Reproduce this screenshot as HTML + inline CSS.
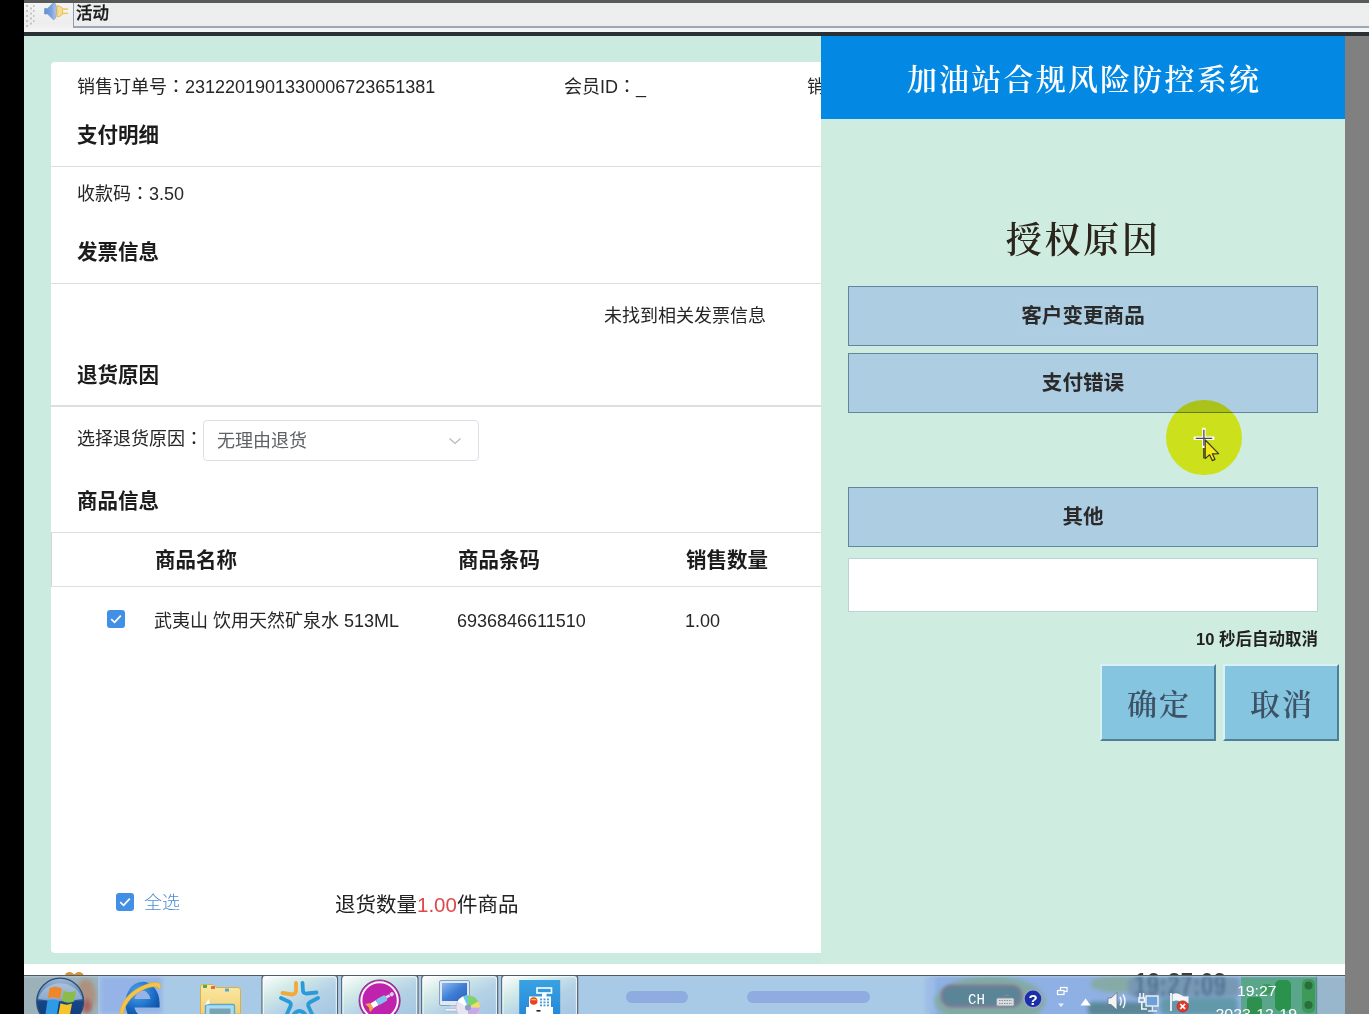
<!DOCTYPE html>
<html lang="zh-CN">
<head>
<meta charset="utf-8">
<title>加油站合规风险防控系统</title>
<style>
*{box-sizing:border-box;margin:0;padding:0}
html,body{width:1369px;height:1014px;overflow:hidden;background:#cbebe0}
body{position:relative;font-family:"Liberation Sans","Noto Sans CJK SC",sans-serif;color:#2b2b2b;font-size:18px}
.abs{position:absolute}
#blackbar{left:0;top:0;width:24px;height:1014px;background:#000}
#topstrip{left:0;top:0;width:1369px;height:3px;background:#58595a}
#toolbar{left:24px;top:3px;width:1345px;height:29px;background:linear-gradient(#f3f4f4,#eeeded 70%,#f4f6f7)}
#tbfield{left:49px;top:0;width:1296px;height:25px;border-left:1px solid #8e9bb0;border-bottom:2px solid #9ba7b5;background:linear-gradient(#eceeee,#eeeded)}
#tbtext{left:76px;top:3px;font-size:16.5px;line-height:20px;font-weight:500;color:#1c1c1c;-webkit-text-stroke:0.35px #1c1c1c}
#darkline{left:24px;top:32px;width:1345px;height:4px;background:#2b3034}
#graystrip{left:1345px;top:36px;width:24px;height:978px;background:#808080}
#main{left:24px;top:36px;width:1321px;height:928px;background:#cbebe0}
#card{left:51px;top:62.300px;width:800px;height:890.400px;background:#fff;border-radius:4px}
.t{position:absolute;white-space:nowrap;line-height:24px;font-size:18px;color:#262626;margin-top:0.7px}
.c{font-family:"Noto Sans CJK JP",sans-serif;line-height:0}
.h{position:absolute;white-space:nowrap;line-height:28px;font-size:20.5px;font-weight:700;color:#1c1c1c;transform:translateY(0px) scaleY(1.02)}
.hr{position:absolute;left:51px;width:780px;height:1.500px;background:#dddde2;margin-top:-0.400px}
#dialog{left:821px;top:36px;width:524px;height:928px;background:#ceece0}
#dhead{left:0;top:0;width:524px;height:83px;background:#0388e3;color:#fff;text-align:center;font-family:"Liberation Serif","Noto Serif CJK SC",serif;font-weight:600;font-size:30px;line-height:88px;letter-spacing:2.2px;text-indent:2px}
.rbtn{position:absolute;left:27px;width:470px;height:60px;background:#adcde2;border:1px solid #62849c;text-align:center;font-size:20.6px;font-weight:700;line-height:58px;color:#2a2a2a}
.bbtn{position:absolute;top:628px;width:116px;height:77px;background:#86c5e0;border-top:2px solid #d9f0f7;border-left:2px solid #d9f0f7;border-right:2px solid #4f7f96;border-bottom:2px solid #4f7f96;text-align:center;font-family:"Liberation Serif","Noto Serif CJK SC",serif;font-size:30px;font-weight:600;line-height:78px;color:#3d5266;letter-spacing:2px;text-indent:2px}
.cb{width:18px;height:18px;border-radius:3px;background:#4290e6}
.cb svg{position:absolute;left:0;top:0}
#taskbar{left:24px;top:975px;width:1321px;height:39px;background:#a9cbe6}
#whitegap{left:24px;top:964px;width:1321px;height:11px;background:#fff}
</style>
</head>
<body>
<div class="abs" id="main"></div>
<div class="abs" id="card"></div>

<div class="t" style="left:77px;top:74px">销售订单号<span class="c" lang="ja">：</span>2312201901330006723651381</div>
<div class="t" style="left:564px;top:74px">会员ID<span class="c" lang="ja">：</span>_</div>
<div class="t" style="left:807px;top:74px">销售</div>
<div class="h" style="left:77px;top:121px">支付明细</div>
<div class="hr" style="top:166px"></div>
<div class="t" style="left:77px;top:181px">收款码<span class="c" lang="ja">：</span>3.50</div>
<div class="h" style="left:77px;top:238px">发票信息</div>
<div class="hr" style="top:283px"></div>
<div class="t" style="left:604px;top:303px">未找到相关发票信息</div>
<div class="h" style="left:77px;top:361px">退货原因</div>
<div class="hr" style="top:405.700px"></div>
<div class="t" style="left:77px;top:426.800px">选择退货原因<span class="c" lang="ja">：</span></div>
<div class="abs" id="select" style="left:203.300px;top:419.600px;width:275.700px;height:41.400px;border:1px solid #dcdfe6;border-radius:4px;background:#fff">
  <div class="t" style="left:12.700px;top:7.800px;color:#606266">无理由退货</div>
  <svg class="abs" style="left:244px;top:14px" width="14" height="12" viewBox="0 0 14 12"><path d="M1.5 3.5 L7 8.5 L12.5 3.5" fill="none" stroke="#b4b8c0" stroke-width="1.2"/></svg>
</div>
<div class="h" style="left:77px;top:487px">商品信息</div>
<div class="hr" style="top:532px"></div>
<div class="h" style="left:155px;top:546px">商品名称</div>
<div class="h" style="left:458px;top:546px">商品条码</div>
<div class="h" style="left:686px;top:546px">销售数量</div>
<div class="hr" style="top:586px"></div>
<div class="abs" style="left:51px;top:532px;width:1.200px;height:55px;background:#d4d6da"></div>
<div class="abs cb" style="left:106.5px;top:610px"><svg width="18" height="18" viewBox="0 0 18 18"><path d="M4.2 9.2 L7.6 12.3 L13.8 5.6" fill="none" stroke="#fff" stroke-width="1.7"/></svg></div>
<div class="t" style="left:154px;top:608px">武夷山 饮用天然矿泉水 513ML</div>
<div class="t" style="left:457px;top:608px">6936846611510</div>
<div class="t" style="left:685px;top:608px">1.00</div>
<div class="abs cb" style="left:115.5px;top:892.5px"><svg width="18" height="18" viewBox="0 0 18 18"><path d="M4.2 9.2 L7.6 12.3 L13.8 5.6" fill="none" stroke="#fff" stroke-width="1.7"/></svg></div>
<div class="t" style="left:144px;top:890px;color:#4a8bd6;font-weight:300">全选</div>
<div class="t" style="left:335px;top:890px;font-size:20.5px;line-height:28px;color:#222">退货数量<span style="color:#e0464a;font-weight:300">1.00</span>件商品</div>

<div class="abs" id="dialog">
  <div class="abs" id="dhead">加油站合规风险防控系统</div>
  <div class="abs" id="dtitle" style="left:0;top:179.5px;width:524px;text-align:center;font-family:'Liberation Serif','Noto Serif CJK SC',serif;font-size:36px;font-weight:600;line-height:50px;color:#2c251c;letter-spacing:2.8px;text-indent:0.5px">授权原因</div>
  <div class="rbtn" style="top:250px">客户变更商品</div>
  <div class="abs" style="left:198.500px;top:264px;width:126px;height:29.500px;border:1px dotted #bccbea"></div>
  <div class="rbtn" style="top:317px">支付错误</div>
  <div class="rbtn" style="top:451px">其他</div>
  <div class="abs" id="dinput" style="left:27px;top:522px;width:470px;height:54px;background:#fff;border:1px solid #b9d4d6"></div>
  <div class="t" style="right:27px;top:590.5px;font-size:16.5px;font-weight:700;color:#222">10 秒后自动取消</div>
  <div class="bbtn" style="left:279px">确定</div>
  <div class="bbtn" style="left:402px">取消</div>
</div>
<div class="abs" id="cursorhl" style="left:1166px;top:399.5px;width:75.5px;height:75.5px;border-radius:50%;background:#fdf21e;mix-blend-mode:multiply"></div>
<svg class="abs" id="cursor" style="left:1190px;top:425px" width="34" height="40" viewBox="1190 425 34 40">
  <path d="M1203.9 429.4 V446.2 M1195.3 438.3 H1212.7" stroke="#fff" stroke-width="3.4" fill="none" stroke-linecap="square"/>
  <path d="M1205.2 440 L1205.2 458.6 L1209.6 454.8 L1212.3 460.6 L1215 459.4 L1212.4 453.8 L1218.6 453.6 Z" fill="#f6e71a" stroke="#3a3a20" stroke-width="1.2" stroke-linejoin="round"/>
  <path d="M1203.9 429.8 V445.8 M1195.8 438.3 H1212.2" stroke="#4a4a55" stroke-width="1.3" fill="none"/>
  <path d="M1203.9 448 V458.5" stroke="#3a3a30" stroke-width="1.4" fill="none"/>
</svg>

<div class="abs" id="whitegap"></div>
<div class="abs" id="taskbar"></div>
<svg class="abs" id="tasksvg" style="left:24px;top:964px" width="1321" height="50" viewBox="24 964 1321 50">
  <defs>
    <filter id="b2" x="-20%" y="-50%" width="140%" height="200%"><feGaussianBlur stdDeviation="2"/></filter>
    <filter id="b4" x="-30%" y="-60%" width="160%" height="220%"><feGaussianBlur stdDeviation="4"/></filter>
    <filter id="b15" x="-20%" y="-30%" width="140%" height="160%"><feGaussianBlur stdDeviation="1.6"/></filter>
    <filter id="b1" x="-20%" y="-20%" width="140%" height="140%"><feGaussianBlur stdDeviation="0.7"/></filter>
    <linearGradient id="tbtn" x1="0" y1="0" x2="0.9" y2="1"><stop offset="0" stop-color="#ffffff"/><stop offset="0.3" stop-color="#d4ebe8"/><stop offset="0.62" stop-color="#b4d2e6"/><stop offset="1" stop-color="#a6c6e2"/></linearGradient>
    <linearGradient id="orb" x1="0" y1="0" x2="0" y2="1"><stop offset="0" stop-color="#9fb8d4"/><stop offset="0.42" stop-color="#4f7fb4"/><stop offset="0.5" stop-color="#164688"/><stop offset="1" stop-color="#0e3876"/></linearGradient>
    <radialGradient id="ieg" gradientUnits="userSpaceOnUse" cx="138" cy="992" r="30"><stop offset="0" stop-color="#4aa6ec"/><stop offset="0.6" stop-color="#1866c0"/><stop offset="1" stop-color="#0c4290"/></radialGradient>
    <linearGradient id="fold" x1="0" y1="0" x2="0" y2="1"><stop offset="0" stop-color="#fbe9a6"/><stop offset="1" stop-color="#f2cf72"/></linearGradient>
    <linearGradient id="mon" x1="0" y1="0" x2="1" y2="1"><stop offset="0" stop-color="#8db8ee"/><stop offset="0.5" stop-color="#3f7fd6"/><stop offset="1" stop-color="#2c5fb8"/></linearGradient>
    <linearGradient id="pos" x1="0" y1="0" x2="0" y2="1"><stop offset="0" stop-color="#3aa2e2"/><stop offset="1" stop-color="#2388d8"/></linearGradient>
    <clipPath id="tclip"><rect x="24" y="975" width="1321" height="39"/></clipPath>
  </defs>
  <clipPath id="aclip"><rect x="24" y="964" width="1321" height="11.2"/></clipPath>
  <g clip-path="url(#aclip)">
    <text x="1135" y="987.800" font-family="Liberation Sans, sans-serif" font-weight="700" font-size="22" fill="#3a3f3c" textLength="91" lengthAdjust="spacing">19:27:09</text>
    <ellipse cx="69.500" cy="976" rx="4.600" ry="4" fill="#d89030" filter="url(#b1)"/><ellipse cx="79" cy="976" rx="4.600" ry="4" fill="#d89030" filter="url(#b1)"/><rect x="69" y="974" width="10" height="3" fill="#d89030" filter="url(#b1)"/>
  </g>
  <g clip-path="url(#tclip)">
  <rect x="24" y="975" width="1321" height="39" fill="#a9cae6"/>
  <!-- left grey-ish start area -->
  <rect x="24" y="976" width="74" height="38" fill="#9cb2b8"/>
  <ellipse cx="86" cy="996" rx="10" ry="17" fill="#b08a72" opacity="0.8" filter="url(#b2)"/>
  <ellipse cx="87" cy="1006" rx="4" ry="7" fill="#a04a5a" opacity="0.7" filter="url(#b2)"/>
  <rect x="100" y="976" width="62" height="38" fill="#92b0e6" opacity="0.85" filter="url(#b2)"/>
  <!-- right tray background blotches -->
  <rect x="930" y="976" width="390" height="38" fill="#8fb0e4"/>
  <rect x="925" y="976" width="10" height="38" fill="#9cbde6" filter="url(#b2)"/>
  <ellipse cx="990" cy="1001" rx="55" ry="25" fill="#82aaa2" filter="url(#b2)"/>
  <rect x="942" y="986" width="79" height="20" rx="9" fill="#5a8596" stroke="#7d7698" stroke-width="2.500" filter="url(#b15)"/>
  <ellipse cx="1120" cy="984" rx="30" ry="9" fill="#86aaa6" filter="url(#b2)"/>
  <rect x="1088" y="1002" width="66" height="14" rx="5" fill="#5a8898" filter="url(#b2)"/>
  <rect x="1128" y="977" width="112" height="20" rx="6" fill="#7898b4" filter="url(#b2)"/>
  <text transform="translate(1134 996) scale(1 1.450)" x="0" y="0" font-family="Liberation Sans, sans-serif" font-weight="700" font-size="22" fill="#4a6c8e" opacity="0.800" textLength="92" lengthAdjust="spacing" filter="url(#b15)">19:27:09</text>
  <rect x="1160" y="997" width="78" height="18" rx="6" fill="#6498aa" filter="url(#b2)"/>
  <rect x="1241" y="977" width="76" height="38" fill="#5aa68a" filter="url(#b1)"/>
  <rect x="1247" y="997" width="15" height="18" rx="4" fill="#2f9050" filter="url(#b1)"/>
  <rect x="1275" y="980" width="16" height="31" rx="5" fill="#2a924e" filter="url(#b1)"/>
  <rect x="1262" y="984" width="10" height="10" rx="4" fill="#3a9a5e" filter="url(#b1)"/>
  <rect x="1302" y="979" width="13" height="34" rx="5" fill="#3e9a58" filter="url(#b1)"/>
  <circle cx="1308.500" cy="985.500" r="4" fill="#2a6e3e" filter="url(#b1)"/>
  <circle cx="1308.500" cy="1005" r="4" fill="#2a6e3e" filter="url(#b1)"/>
  <rect x="1316" y="976" width="29" height="38" fill="#98b6cc"/>
  <rect x="1316" y="976" width="1.200" height="38" fill="#5d8a98"/>
  <!-- ghost blobs -->
  <rect x="626" y="991" width="62" height="12" rx="6" fill="#8fabe0" filter="url(#b1)"/>
  <rect x="747" y="991" width="123" height="12" rx="6" fill="#8fabe0" filter="url(#b1)"/>
  <!-- top border line -->
  <rect x="24" y="975" width="1321" height="1.2" fill="#4e5a66"/>
  <rect x="24" y="976.2" width="1321" height="1" fill="#c4dcf0" opacity="0.7"/>

  <!-- start orb -->
  <circle cx="60.150" cy="1001.600" r="23.400" fill="url(#orb)" stroke="#2c4c74" stroke-width="1.300"/>
  <path d="M38 999 Q60 1003.500 82.300 999 A23.400 23.400 0 0 0 38 999 Z" fill="#c4d4e4" opacity="0.550"/>
  <path d="M49.500 988.300 Q55.500 985 62 988.800 L60 998.800 Q54 996 48 998.300 Z" fill="#f0862a"/>
  <path d="M63.500 990.800 Q69.500 993.500 76 990.800 L74 1001.500 Q68 1004 62 1001 Z" fill="#8cbc48"/>
  <path d="M47.500 1000.300 Q53.500 998.500 59 1001 L57 1014 L45.500 1014 Z" fill="#2f9ae6"/>
  <path d="M60.500 1003.300 Q66.500 1006 72 1003.600 L70 1014 L58.500 1014 Z" fill="#f6c628"/>

  <!-- IE -->
  <path d="M131 1003.300 H155.300 A12.800 17 0 1 0 150.200 1016.800" fill="none" stroke="url(#ieg)" stroke-width="8.600"/>
  <path d="M119.500 1014 Q121 997 140 987 Q154 980 160 983.500 Q162 986 159.500 989.500 Q157.500 984.500 146 988.500 Q127 996.500 123 1014 Z" fill="#f3c34a" stroke="#d9a02a" stroke-width="0.400"/>

  <!-- folder -->
  <path d="M200.500 987 Q200.500 984.500 203 984.500 L213 984.500 L216 987.500 L238 987.500 Q240.500 987.500 240.500 990 L240.500 1014 L200.500 1014 Z" fill="url(#fold)" stroke="#d9b04e" stroke-width="1"/>
  <rect x="203" y="985" width="4" height="3" fill="#4fae4a"/><rect x="211" y="986" width="4" height="3" fill="#e0703a"/><rect x="225" y="988.500" width="4" height="3" fill="#5aa8c8"/>
  <rect x="205.500" y="1004.500" width="29" height="13" rx="1.500" fill="#a8dcf2" stroke="#5aa8d4" stroke-width="1.400"/>
  <rect x="209.500" y="1008.500" width="21" height="9" fill="#7aa4b4"/>
  <path d="M205 1005 l3.500 -6 l1.500 4.500 z" fill="#fff"/>

  <!-- taskbar buttons -->
  <g>
    <rect x="262" y="975.500" width="75.500" height="42" rx="3" fill="url(#tbtn)" stroke="#505c68" stroke-width="1.100"/>
    <rect x="263.300" y="976.800" width="73" height="40" rx="2.500" fill="none" stroke="#fff" stroke-width="1" opacity="0.8"/>
    <rect x="341.700" y="975.500" width="76.300" height="42" rx="3" fill="url(#tbtn)" stroke="#505c68" stroke-width="1.100"/>
    <rect x="343" y="976.800" width="73.700" height="40" rx="2.500" fill="none" stroke="#fff" stroke-width="1" opacity="0.8"/>
    <rect x="421.700" y="975.500" width="76" height="42" rx="3" fill="url(#tbtn)" stroke="#505c68" stroke-width="1.100"/>
    <rect x="423" y="976.800" width="73.400" height="40" rx="2.500" fill="none" stroke="#fff" stroke-width="1" opacity="0.8"/>
    <rect x="501.700" y="975.500" width="76" height="42" rx="3" fill="url(#tbtn)" stroke="#505c68" stroke-width="1.100"/>
    <rect x="503" y="976.800" width="73.400" height="40" rx="2.500" fill="none" stroke="#fff" stroke-width="1" opacity="0.8"/>
  </g>

  <!-- star icon -->
  <g fill="none" stroke-width="3.800" stroke-linecap="round" stroke-linejoin="round">
    <path d="M296 983 L296 991 Q295.500 994.500 292 994.500 L282.500 993" stroke="#f3a83a"/>
    <path d="M302.500 983 L303 991 Q303.500 993.800 307 993.500 L316.500 992.500" stroke="#2b9bd8"/>
    <path d="M281 998 L289.500 1002 Q291.500 1003.500 290.500 1006 L287 1014" stroke="#2b9bd8"/>
    <path d="M318 998 L309.500 1002.500 Q307.500 1004 308.500 1006.500 L312 1014" stroke="#2b9bd8"/>
    <path d="M294 1014 Q299.500 1008 305 1014" stroke="#2b9bd8"/>
  </g>

  <!-- magenta circle icon -->
  <circle cx="379.600" cy="1000.500" r="20.600" fill="#bf23ae" stroke="#7a2a78" stroke-width="0.800"/>
  <circle cx="379.600" cy="1000.500" r="18.200" fill="none" stroke="#fff" stroke-width="2"/>
  <g transform="translate(380 1001) rotate(-30) scale(0.8) translate(-379 -1001)">
    <rect x="367" y="997.500" width="8" height="7" fill="#fff"/>
    <rect x="375" y="997" width="13" height="8" rx="2" fill="#7fc4ee"/>
    <rect x="388" y="999.500" width="5" height="3" fill="#e8d8f0"/>
    <circle cx="396" cy="1001" r="2.600" fill="#d8d0f0"/>
    <path d="M367 997 L361 995 L363 1001 L361 1007 L367 1005 Z" fill="#f6a23a"/>
  </g>

  <!-- monitor + cd -->
  <rect x="439.500" y="980.500" width="30" height="25" rx="1.500" fill="#dfe9f6" stroke="#8a9fc0" stroke-width="1"/>
  <rect x="442" y="983" width="25" height="18" fill="url(#mon)"/>
  <rect x="450" y="1005.500" width="9" height="3.500" fill="#c8d4e6"/>
  <rect x="445" y="1008.500" width="19" height="2.500" rx="1" fill="#eef2f8" stroke="#9aa8c0" stroke-width="0.500"/>
  <g>
    <circle cx="468" cy="1007.500" r="12" fill="#e8e4f2" stroke="#b8b0d0" stroke-width="0.600"/>
    <path d="M468 1007.500 L468 995.500 A12 12 0 0 1 478.400 1001.500 Z" fill="#7fd36a"/>
    <path d="M468 1007.500 L478.400 1001.500 A12 12 0 0 1 480 1007.500 Z" fill="#f0e060"/>
    <path d="M468 1007.500 L463 996.600 A12 12 0 0 1 468 995.500 Z" fill="#68c8e8"/>
    <path d="M468 1007.500 L457.600 1001.500 A12 12 0 0 1 463 996.600 Z" fill="#fff"/>
    <path d="M468 1007.500 L480 1007.500 A12 12 0 0 1 477 1014 L468 1014 Z" fill="#c8a8e8"/>
    <circle cx="468" cy="1007.500" r="3" fill="#8aa0c8"/>
  </g>

  <!-- POS icon -->
  <rect x="519.200" y="980" width="41" height="36" fill="url(#pos)"/>
  <rect x="537" y="988" width="14.500" height="5" fill="none" stroke="#fff" stroke-width="1.600"/>
  <rect x="542" y="993" width="4.500" height="4" fill="#fff"/>
  <path d="M529 996.500 L551 996.500 L551 1007 L553 1007 L553 1014 L526 1014 L526 1007 L529 1007 Z" fill="#fff"/>
  <circle cx="533.700" cy="1001" r="3.800" fill="#e8402a"/>
  <path d="M530 1000.200 Q533.700 997.500 537.400 1000.200 Z" fill="#f8c820"/>
  <g fill="#4a9ad8"><rect x="540" y="998.500" width="2" height="1.800"/><rect x="543.500" y="998.500" width="2" height="1.800"/><rect x="547" y="998.500" width="2" height="1.800"/><rect x="540" y="1001.500" width="2" height="1.800"/><rect x="543.500" y="1001.500" width="2" height="1.800"/><rect x="547" y="1001.500" width="2" height="1.800"/><rect x="540" y="1004.500" width="2" height="1.800"/><rect x="543.500" y="1004.500" width="2" height="1.800"/><rect x="547" y="1004.500" width="2" height="1.800"/></g>
  <rect x="536.500" y="1010" width="4" height="1.600" fill="#222"/>

  <!-- tray -->
  <text x="968" y="1004" font-family="Liberation Mono, monospace" font-size="14" fill="#fff" textLength="17" lengthAdjust="spacingAndGlyphs">CH</text>
  <rect x="996.500" y="998" width="17.500" height="8" rx="1.500" fill="#d8dce0" stroke="#8a9098" stroke-width="0.800"/>
  <path d="M999 1000.500 H1012 M999 1003.500 H1012" stroke="#8a9098" stroke-width="1" stroke-dasharray="1.500 1"/>
  <path d="M1003 997.500 Q1004 994.500 1009 995" stroke="#8a9098" stroke-width="0.800" fill="none"/>
  <circle cx="1033" cy="998.800" r="9" fill="#1b2fa6" stroke="#9aa6c8" stroke-width="1.400"/>
  <text x="1033" y="1004.500" text-anchor="middle" font-family="Liberation Sans, sans-serif" font-weight="700" font-size="15" fill="#fff">?</text>
  <rect x="1060.500" y="987.500" width="6.500" height="4" fill="none" stroke="#fff" stroke-width="1.200"/>
  <rect x="1057.500" y="990.500" width="6.500" height="4" fill="#8fb0e2" stroke="#fff" stroke-width="1.200"/>
  <path d="M1058 1003.500 L1064 1003.500 L1061 1007 Z" fill="#e8f0fa"/>
  <path d="M1080.500 1005.500 L1090.700 1005.500 L1085.600 998.600 Z" fill="#fff"/>
  <path d="M1108 998 L1111 998 L1117 992.500 L1117 1010 L1111 1004.500 L1108 1004.500 Z" fill="#f2f4f6" stroke="#6a7680" stroke-width="0.800"/>
  <path d="M1120 997 Q1122.500 1001.200 1120 1005.500 M1123 994.500 Q1127 1001.200 1123 1008" fill="none" stroke="#f2f4f6" stroke-width="1.500"/>
  <!-- network -->
  <rect x="1146" y="996" width="12" height="10" fill="#6fa0d8" stroke="#e8eef4" stroke-width="1.500"/>
  <path d="M1148 1011 H1157 M1152.500 1006.500 V1011" stroke="#e8eef4" stroke-width="1.500"/>
  <path d="M1140 993 V998 M1143.500 993 V998 M1139 998 H1144.500 V1002 H1139 Z M1141.800 1002 V1009 H1147" stroke="#f4f6f8" stroke-width="1.500" fill="none"/>
  <!-- flag -->
  <path d="M1171 993 V1011" stroke="#f4f6f8" stroke-width="1.800"/>
  <path d="M1172.500 994 Q1177 992 1181 995 Q1185 997.500 1188.500 996 L1188.500 1003 Q1185 1004.500 1181 1002 Q1177 999.500 1172.500 1001.500 Z" fill="#f4f6f8"/>
  <circle cx="1182.700" cy="1006.400" r="5.600" fill="#e03a2e" stroke="#b02018" stroke-width="0.600"/>
  <path d="M1180.300 1004 L1185.100 1008.800 M1185.100 1004 L1180.300 1008.800" stroke="#fff" stroke-width="1.700"/>
  <!-- clock -->
  <text x="1237" y="995.500" font-family="Liberation Sans, sans-serif" font-size="15.500" fill="#fff" textLength="39.500" lengthAdjust="spacingAndGlyphs">19:27</text>
  <text x="1215.500" y="1018.500" font-family="Liberation Sans, sans-serif" font-size="15.500" fill="#fff" textLength="81.500" lengthAdjust="spacingAndGlyphs">2023-12-19</text>
  </g>
</svg>
<div class="abs" id="graystrip"></div>
<div class="abs" id="toolbar">
  <div class="abs" id="tbfield"></div>
  <svg class="abs" style="left:0;top:0" width="50" height="29" viewBox="24 3 50 29">
    <g fill="#c4c4c4">
      <rect x="26" y="5" width="2" height="2"/><rect x="26" y="10" width="2" height="2"/><rect x="26" y="15" width="2" height="2"/><rect x="26" y="20" width="2" height="2"/><rect x="26" y="25" width="2" height="2"/>
      <rect x="30" y="7.5" width="2" height="2"/><rect x="30" y="12.5" width="2" height="2"/><rect x="30" y="17.5" width="2" height="2"/><rect x="30" y="22.5" width="2" height="2"/>
      <rect x="33" y="5" width="1.5" height="2"/><rect x="33" y="10" width="1.5" height="2"/><rect x="33" y="15" width="1.5" height="2"/><rect x="33" y="20" width="1.5" height="2"/>
    </g>
    <defs>
      <linearGradient id="spk" x1="0" y1="0" x2="1" y2="0"><stop offset="0" stop-color="#5f8fd6"/><stop offset="0.6" stop-color="#7ea3dc"/><stop offset="1" stop-color="#b9cbea"/></linearGradient>
    </defs>
    <path d="M44.5 8.5 L47.5 8.5 L53.5 2.5 Q56.5 3 56.5 11 Q56.5 19 53.5 19.8 L47.5 14 L44.5 14 Z" fill="url(#spk)" stroke="#6d92cf" stroke-width="0.6"/>
    <path d="M57 5.5 Q61.5 6.5 62.5 8 L62.5 14.5 Q61.5 16 57 17 Z" fill="#f7dc8c" stroke="#e3b44e" stroke-width="0.8"/>
    <rect x="62.5" y="8.3" width="5.5" height="1.6" fill="#efc766"/><rect x="62.5" y="12.6" width="5.5" height="1.6" fill="#efc766"/>
  </svg>
</div>
<div class="abs" id="tbtext">活动</div>
<div class="abs" id="darkline"></div>
<div class="abs" id="topstrip"></div>
<div class="abs" id="blackbar"></div>
</body>
</html>
